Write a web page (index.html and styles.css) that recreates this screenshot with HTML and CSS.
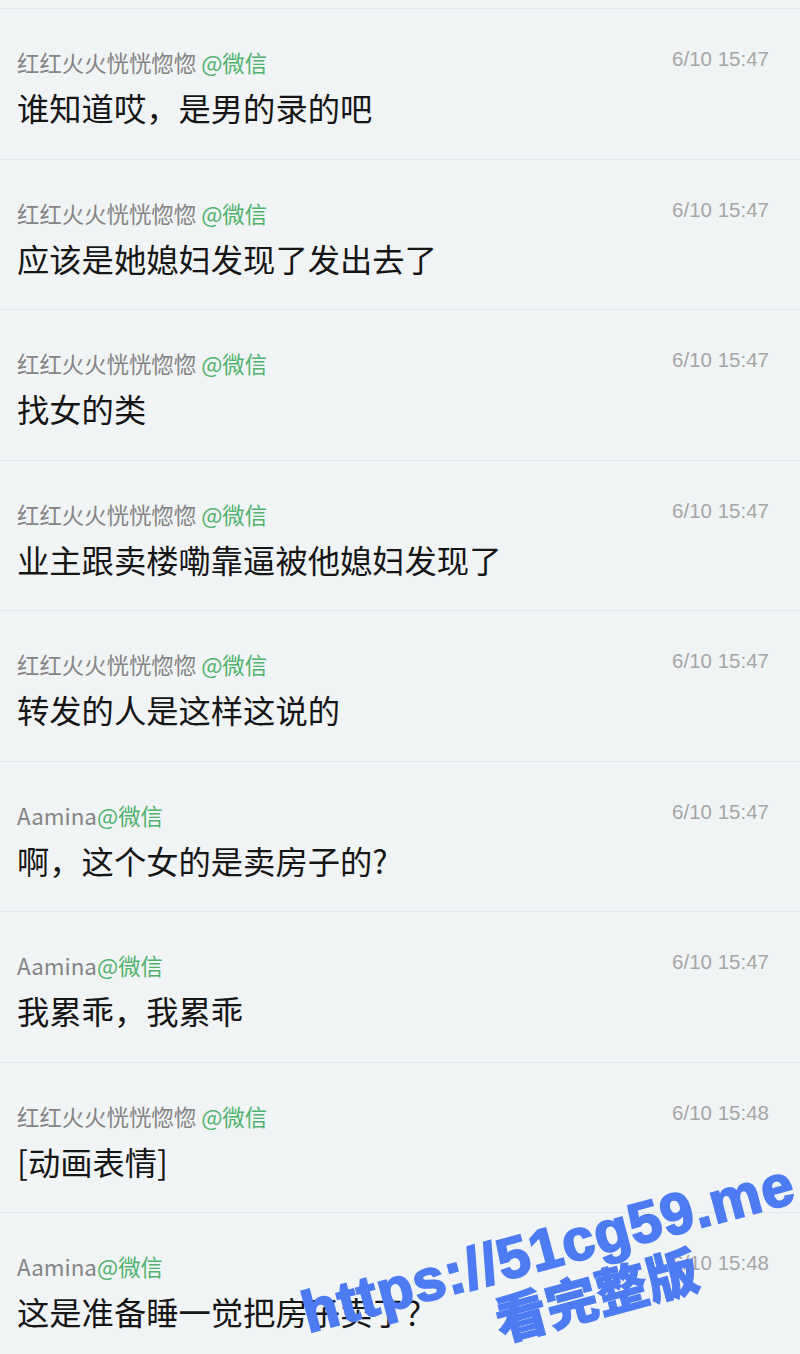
FILE: index.html
```html
<!DOCTYPE html>
<html lang="zh-CN">
<head>
    <meta charset="UTF-8">
    <meta name="viewport" content="width=device-width, initial-scale=1.0">
    <title>评论</title>
    <link rel="stylesheet" href="styles.css">
</head>
<body>

<!-- Comment list -->
<div class="list">
    <div class="item">
        <div class="head">
            <span class="name">红红火火恍恍惚惚<span class="src">@微信</span></span>
            <span class="time">6/10 15:47</span>
        </div>
        <div class="msg">谁知道哎，是男的录的吧</div>
    </div>
    <div class="item">
        <div class="head">
            <span class="name">红红火火恍恍惚惚<span class="src">@微信</span></span>
            <span class="time">6/10 15:47</span>
        </div>
        <div class="msg">应该是她媳妇发现了发出去了</div>
    </div>
    <div class="item">
        <div class="head">
            <span class="name">红红火火恍恍惚惚<span class="src">@微信</span></span>
            <span class="time">6/10 15:47</span>
        </div>
        <div class="msg">找女的类</div>
    </div>
    <div class="item">
        <div class="head">
            <span class="name">红红火火恍恍惚惚<span class="src">@微信</span></span>
            <span class="time">6/10 15:47</span>
        </div>
        <div class="msg">业主跟卖楼嘞靠逼被他媳妇发现了</div>
    </div>
    <div class="item">
        <div class="head">
            <span class="name">红红火火恍恍惚惚<span class="src">@微信</span></span>
            <span class="time">6/10 15:47</span>
        </div>
        <div class="msg">转发的人是这样这说的</div>
    </div>
    <div class="item">
        <div class="head">
            <span class="name">Aamina<span class="src at">@微信</span></span>
            <span class="time">6/10 15:47</span>
        </div>
        <div class="msg">啊，这个女的是卖房子的?</div>
    </div>
    <div class="item">
        <div class="head">
            <span class="name">Aamina<span class="src at">@微信</span></span>
            <span class="time">6/10 15:47</span>
        </div>
        <div class="msg">我累乖，我累乖</div>
    </div>
    <div class="item">
        <div class="head">
            <span class="name">红红火火恍恍惚惚<span class="src">@微信</span></span>
            <span class="time">6/10 15:48</span>
        </div>
        <div class="msg">[动画表情]</div>
    </div>
    <div class="item">
        <div class="head">
            <span class="name">Aamina<span class="src at">@微信</span></span>
            <span class="time">6/10 15:48</span>
        </div>
        <div class="msg">这是准备睡一觉把房子卖了？</div>
    </div>
</div>

<!-- Watermark -->
<span class="mark mark-url">https://51cg59.me</span>
<span class="mark mark-cn">看完整版</span>

</body>
</html>
```

FILE: styles.css
```css
body {
    margin: 0;
    background-color: #f1f4f5;
    font-family: "Noto Sans CJK SC", "Noto Sans", sans-serif;
    overflow: hidden;
}

.list {
    padding-top: 8px;
}

.item {
    box-sizing: border-box;
    height: 150.5px;
    border-top: 1px solid #e2e6e8;
    padding: 38px 31px 0 17px;
}

.head {
    display: flex;
    justify-content: space-between;
    align-items: flex-start;
}

.name {
    font-size: 22.4px;
    line-height: 30px;
    color: #858585;
}

.src {
    color: #4fb26d;
    margin-left: 5px;
}

.src.at {
    margin-left: 0;
}

.time {
    font-family: "Liberation Sans", Roboto, sans-serif;
    font-size: 20.5px;
    line-height: 23px;
    color: #a6a6a6;
}

.msg {
    margin-top: 8px;
    font-size: 32.3px;
    line-height: 44px;
    color: #161616;
}

/* Watermark over the bottom rows */
.mark {
    position: absolute;
    transform: translate(-50%, -50%) rotate(-15deg);
    color: #4d7bf2;
    font-weight: 900;
    white-space: nowrap;
    line-height: 1;
}

.mark-url {
    left: 548px;
    top: 1248px;
    font-family: "Liberation Sans", sans-serif;
    font-size: 58px;
    letter-spacing: 1px;
    -webkit-text-stroke: 2px #4d7bf2;
}

.mark-cn {
    left: 596px;
    top: 1293px;
    font-family: "Noto Sans CJK SC", sans-serif;
    font-size: 52px;
    -webkit-text-stroke: 1px #4d7bf2;
}
```
